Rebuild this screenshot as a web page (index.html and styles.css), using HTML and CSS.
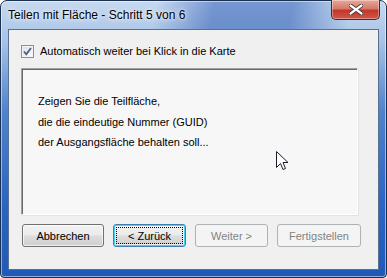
FILE: index.html
```html
<html>
<head>
    <link rel="stylesheet" href="styles.css">
</head>
<body>
    <div class="window">
        <div class="titlebar">
            <span class="title">Teilen mit Fläche - Schritt 5 von 6</span>
            <button class="close">
                <svg width="14" height="11" viewBox="0 0 14 11">
                    <path d="M1.5 1.5 L12.5 9.5 M12.5 1.5 L1.5 9.5" stroke="#3a2a2a" stroke-width="4" stroke-linecap="round"/>
                    <path d="M1.5 1.5 L12.5 9.5 M12.5 1.5 L1.5 9.5" stroke="#fff" stroke-width="2.2" stroke-linecap="round"/>
                </svg>
            </button>
        </div>
        <div class="client">
            <label class="auto">
                <span class="check">
                    <svg width="11" height="11" viewBox="0 0 11 11">
                        <path d="M2 5.5 L4.3 8.3 L9 2" stroke="#4a5f8a" stroke-width="1.8" fill="none"/>
                    </svg>
                </span>
                Automatisch weiter bei Klick in die Karte
            </label>
            <div class="panel">
                <p>Zeigen Sie die Teilfläche,</p>
                <p>die die eindeutige Nummer (GUID)</p>
                <p>der Ausgangsfläche behalten soll...</p>
                <svg class="cursor" width="13" height="21" viewBox="0 0 13 21">
                    <path d="M0.5 0.5 L0.5 16.5 L4.5 12.5 L7 18.5 L9.5 17.5 L7 11.5 L12 11.5 Z" fill="#fff" stroke="#1a1a2a" stroke-width="1"/>
                </svg>
            </div>
            <div class="buttons">
                <button class="btn btn-cancel">Abbrechen</button>
                <button class="btn btn-back focus"><span>&lt; Zurück</span></button>
                <button class="btn btn-next" disabled>Weiter &gt;</button>
                <button class="btn btn-finish" disabled>Fertigstellen</button>
            </div>
        </div>
    </div>
</body>
</html>
```

FILE: styles.css
```css
* {
    margin: 0;
    padding: 0;
    box-sizing: border-box;
}
body {
    background: #ffffff;
    font-family: "Liberation Sans", Arial, sans-serif;
    font-size: 11px;
    color: #000;
}
.window {
    width: 387px;
    height: 278px;
    padding: 0 7px 7px 7px;
    border: 1px solid #1c3050;
    border-radius: 7px 7px 4px 4px;
    background:
        linear-gradient(100deg, rgba(255,255,255,0) 40%, rgba(20,70,170,0.45) 55%, rgba(20,70,170,0.45) 75%, rgba(255,255,255,0) 90%) 0 0 / 100% 29px no-repeat,
        linear-gradient(to bottom, #c6d9f0 0, #a8c3e6 40px, #4f83cc 110px, #2c66c2 200px, #1f59b8 100%);
    box-shadow: inset 0 0 0 1px rgba(255,255,255,0.5);
    display: flex;
    flex-direction: column;
}
.titlebar {
    height: 28px;
    display: flex;
    align-items: flex-start;
}
.title {
    margin-top: 7px;
    font-size: 12px;
    color: #000;
    text-shadow: 0 0 6px rgba(255,255,255,0.9), 0 0 3px rgba(255,255,255,0.8);
}
.close {
    margin-left: auto;
    margin-right: -1px;
    margin-top: -1px;
    width: 49px;
    height: 20px;
    border: 1px solid #4a2a2a;
    border-top: none;
    border-radius: 0 0 5px 5px;
    background: linear-gradient(to bottom, #e8a89a 0, #d47a6a 45%, #c2382a 55%, #d0584a 100%);
    box-shadow: inset 0 0 0 1px rgba(255,255,255,0.35);
    display: flex;
    align-items: center;
    justify-content: center;
}
.client {
    flex: 1;
    background: #f0f0f0;
    border: 1px solid #5a7090;
    padding: 14px 0 0 12px;
    display: flex;
    flex-direction: column;
}
.auto {
    display: flex;
    align-items: center;
    gap: 6px;
    height: 14px;
}
.check {
    width: 13px;
    height: 13px;
    border: 1px solid #8f8f8f;
    background: linear-gradient(135deg, #dcdcdc, #ffffff);
    box-shadow: inset 0 0 0 1px #f4f4f4;
    display: flex;
    align-items: center;
    justify-content: center;
}
.panel {
    position: relative;
    margin-top: 10px;
    width: 337px;
    height: 147px;
    border-top: 1px solid #a0a0a0;
    border-left: 1px solid #a0a0a0;
    border-right: 1px solid #ffffff;
    border-bottom: 1px solid #ffffff;
    box-shadow: inset 1px 1px 0 #696969, 1px 1px 0 #e3e3e3;
    background: #f7f7f7;
    padding: 22px 0 0 16px;
}
.panel p {
    line-height: 20.5px;
}
.cursor {
    position: absolute;
    left: 254px;
    top: 82px;
}
.buttons {
    margin-top: 9px;
    margin-left: 1px;
    display: flex;
    gap: 9px;
}
.btn {
    height: 23px;
    font-family: "Liberation Sans", Arial, sans-serif;
    font-size: 11px;
    color: #000;
    border: 1px solid #707070;
    border-radius: 3px;
    background: linear-gradient(to bottom, #f2f2f2 0, #ebebeb 48%, #dddddd 52%, #cfcfcf 100%);
    box-shadow: inset 0 0 0 1px rgba(255,255,255,0.7);
}
.btn-cancel {
    width: 82px;
}
.btn-back {
    width: 73px;
}
.btn-next {
    width: 73px;
}
.btn-finish {
    width: 84px;
}
.focus {
    border-color: #3c7fb1;
    box-shadow: inset 0 0 0 1px #48d0f6, inset 0 0 0 2px rgba(255,255,255,0.6);
    padding: 2px;
}
.focus span {
    display: flex;
    height: 100%;
    align-items: center;
    justify-content: center;
    border: 1px dotted #000;
}
.btn:disabled {
    color: #838383;
    border-color: #adb2b5;
    background: #f4f4f4;
    box-shadow: none;
}
```
